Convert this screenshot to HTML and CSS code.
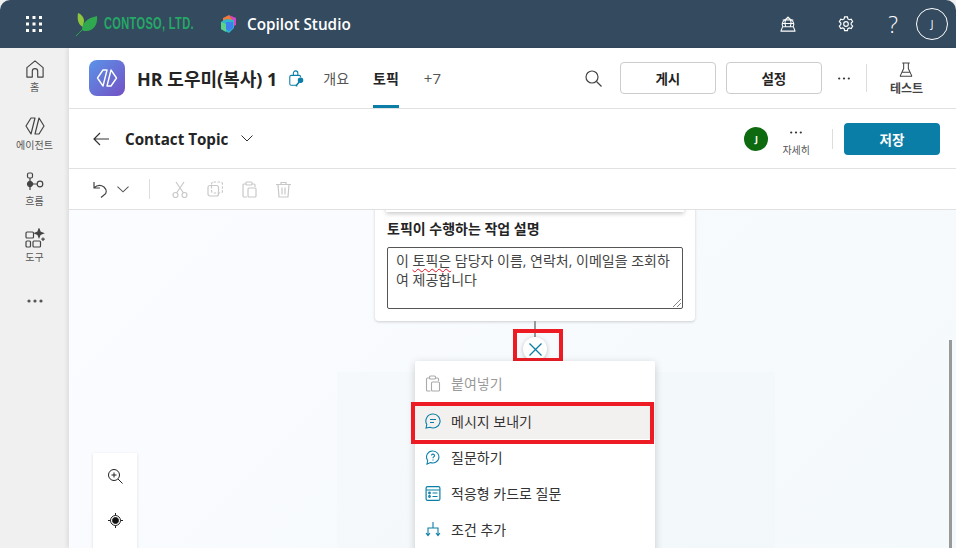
FILE: index.html
```html
<!DOCTYPE html>
<html lang="ko">
<head>
    <meta charset="UTF-8">
    <title>Copilot Studio</title>
    <link rel="stylesheet" href="styles.css">
</head>
<body>
    <header class="topbar">
        <svg class="waffle" width="16" height="16" viewBox="0 0 16 16" fill="#fff">
            <rect x="0" y="0" width="3" height="3"/><rect x="6.5" y="0" width="3" height="3"/><rect x="13" y="0" width="3" height="3"/>
            <rect x="0" y="6.5" width="3" height="3"/><rect x="6.5" y="6.5" width="3" height="3"/><rect x="13" y="6.5" width="3" height="3"/>
            <rect x="0" y="13" width="3" height="3"/><rect x="6.5" y="13" width="3" height="3"/><rect x="13" y="13" width="3" height="3"/>
        </svg>
        <svg class="leaf" width="22" height="24" viewBox="0 0 22 24">
            <path d="M7 15C2 13 1 7 2 1c3 1 6 4 6 8z" fill="#8cc63f"/>
            <path d="M6 18c0-7 5-12 15-14 1 8-3 15-11 15-1 0-3 0-4-1z" fill="#2fa84f"/>
            <path d="M0 24c5-5 9-9 13-14" stroke="#2fa84f" stroke-width="1" fill="none"/>
        </svg>
        <span class="brand">CONTOSO, LTD.</span>
        <svg class="cube" width="18" height="18" viewBox="0 0 18 18">
            <path d="M9 0l7 3v7l-4 2V4z" fill="#d645c8"/>
            <path d="M3 3l6-3 3 4v6H3z" fill="#ef7a3c"/>
            <path d="M1 7l5-3 8 1v8l-5 5-8-4z" fill="#2fb6c9"/>
            <path d="M6 7h7v6l-4 3-3-2z" fill="#3f7ff0"/>
            <path d="M1 7l5 2v8l-5-3z" fill="#5bd28c"/>
        </svg>
        <span class="product">Copilot Studio</span>
        <div class="topbar-actions">
            <svg class="top-icon" width="16" height="16" viewBox="0 0 18 18" fill="none" stroke="#fff" stroke-width="1.2">
                <path d="M3 12a6.500 6.500 0 1 1 12 0"/><path d="M9 1c-4 3-4 8-2.500 11M9 1c4 3 4 8 2.500 11M3 4.500h12M2.300 8.500h13.400"/><path d="M3 12h12l2 5H1z" stroke-linejoin="round"/>
            </svg>
            <svg class="top-icon gear" width="16" height="16" viewBox="0 0 18 18" fill="none" stroke="#fff" stroke-width="1.3">
                <circle cx="9" cy="9" r="2.600"/>
                <path d="M7.400 1h3.200l.5 2.300 1.600.9 2.200-.7 1.600 2.800-1.700 1.600v1.800l1.700 1.600-1.600 2.800-2.200-.7-1.600.9-.5 2.200H7.400l-.5-2.200-1.600-.9-2.200.7-1.600-2.800 1.700-1.600V7.900L1.500 6.300l1.600-2.800 2.200.7 1.600-.9z"/>
            </svg>
            <span class="help">?</span>
            <span class="me">J</span>
        </div>
    </header>

    <div class="shell">
        <nav class="sidebar">
            <a class="nav-item">
                <svg width="18" height="18" viewBox="0 0 20 20" fill="none" stroke="#444" stroke-width="1.300">
                    <path d="M1 8.500 10 1l9 7.500V19h-6v-6.500a3 3 0 0 0-6 0V19H1z" stroke-linejoin="round"/>
                </svg>
                <span>홈</span>
            </a>
            <a class="nav-item">
                <svg width="20" height="20" viewBox="0 0 20 20" fill="none" stroke="#444" stroke-width="1.200" stroke-linejoin="round">
                    <path d="M6 2h4L6 18 1 10zM14 18h-4l4-16 5 8z"/>
                </svg>
                <span>에이전트</span>
            </a>
            <a class="nav-item">
                <svg width="20" height="20" viewBox="0 0 20 20" fill="none" stroke="#444" stroke-width="1.200">
                    <rect x="2.500" y="1" width="5" height="5" rx="1.500"/><path d="M5 6v5M5 13v5M8 12h4"/>
                    <rect x="2.500" y="9.500" width="5" height="5" rx="2.500" fill="#444" transform="rotate(45 5 12)"/>
                    <circle cx="15" cy="12" r="2.800"/>
                </svg>
                <span>흐름</span>
            </a>
            <a class="nav-item">
                <svg width="20" height="20" viewBox="0 0 20 20" fill="none" stroke="#444" stroke-width="1.200">
                    <rect x="1" y="4" width="7.500" height="6" rx="1"/><rect x="1" y="13" width="4.500" height="6" rx="1"/><rect x="8" y="13" width="7.500" height="6" rx="1"/>
                    <path d="M14 1l1.200 3 3 1.200-3 1.200-1.200 3-1.200-3-3-1.200 3-1.200zM18 9.500v3.500M16.300 11.200h3.500" fill="#444"/>
                </svg>
                <span>도구</span>
            </a>
            <svg class="nav-more" width="16" height="4" viewBox="0 0 16 4" fill="#555">
                <circle cx="2" cy="2" r="1.600"/><circle cx="8" cy="2" r="1.600"/><circle cx="14" cy="2" r="1.600"/>
            </svg>
        </nav>

        <main class="main">
            <section class="agent-bar">
                <div class="agent-logo">
                    <svg width="22" height="20" viewBox="0 0 22 20" fill="none" stroke="#fff" stroke-width="1.400" stroke-linejoin="round">
                        <path d="M7 2h4L7 18 1.500 10zM15 18h-4l4-16 5.500 8z"/>
                    </svg>
                </div>
                <h1 class="agent-name">HR 도우미(복사) 1</h1>
                <svg class="agent-lock" width="17" height="17" viewBox="0 0 17 19" fill="none" stroke="#0b7ea8" stroke-width="1.200">
                    <path d="M5 6V3.500a2.500 2.500 0 0 1 5 0V6M8 17H2.500A1.500 1.500 0 0 1 1 15.500v-8A1.500 1.500 0 0 1 2.500 6h9A1.500 1.500 0 0 1 13 7.500V8"/>
                    <circle cx="13" cy="11.500" r="2.500" fill="#0b7ea8"/><path d="M11.500 13.500 8.500 17v1.500" stroke-width="1.800"/>
                </svg>
                <a class="tab">개요</a>
                <a class="tab tab-active">토픽</a>
                <a class="tab tab-more">+7</a>
                <div class="agent-actions">
                    <svg class="search" width="17" height="17" viewBox="0 0 17 17" fill="none" stroke="#444" stroke-width="1.200">
                        <circle cx="7" cy="7" r="6"/><path d="M11.500 11.500 16.500 16.500"/>
                    </svg>
                    <button class="btn">게시</button>
                    <button class="btn">설정</button>
                    <svg class="dots" width="12" height="3" viewBox="0 0 12 3" fill="#333">
                        <circle cx="1.200" cy="1.500" r="1.100"/><circle cx="6" cy="1.500" r="1.100"/><circle cx="10.800" cy="1.500" r="1.100"/>
                    </svg>
                    <span class="vline"></span>
                    <div class="test">
                        <svg width="14" height="15" viewBox="0 0 14 16" fill="none" stroke="#444" stroke-width="1.100">
                            <path d="M3 1h8M4.500 1v6L1 14.500a.5.5 0 0 0 .5.8h11a.5.5 0 0 0 .5-.8L9.500 7V1M3 11h8"/>
                        </svg>
                        <span>테스트</span>
                    </div>
                </div>
            </section>

            <section class="topic-bar">
                <svg class="back" width="16" height="14" viewBox="0 0 16 14" fill="none" stroke="#333" stroke-width="1.200">
                    <path d="M7 1 1 7l6 6M1 7h15"/>
                </svg>
                <span class="topic-name">Contact Topic</span>
                <svg width="12" height="7" viewBox="0 0 12 7" fill="none" stroke="#333" stroke-width="1">
                    <path d="M.5.500 6 6l5.500-5.500"/>
                </svg>
                <div class="topic-actions">
                    <span class="avatar">J</span>
                    <div class="more">
                        <svg class="dots-small" width="12" height="3" viewBox="0 0 12 3" fill="#333">
                            <circle cx="1.200" cy="1.500" r="1.100"/><circle cx="6" cy="1.500" r="1.100"/><circle cx="10.800" cy="1.500" r="1.100"/>
                        </svg>
                        <span>자세히</span>
                    </div>
                    <span class="vline vline-short"></span>
                    <button class="save">저장</button>
                </div>
            </section>

            <section class="toolbar">
                <svg width="15" height="17" viewBox="0 0 15 17" fill="none" stroke="#444" stroke-width="1.200">
                    <path d="M1 1v6h6M1 7c3-3 7-3 10-1 3 3 3 6 0 8l-3 2.500"/>
                </svg>
                <svg class="caret" width="12" height="7" viewBox="0 0 13 7" fill="none" stroke="#555" stroke-width="1.100">
                    <path d="M.5.500 6.500 6l6-5.500"/>
                </svg>
                <span class="tool-sep"></span>
                <svg class="tool-off" width="16" height="17" viewBox="0 0 16 17" fill="none" stroke="#c8c8c8" stroke-width="1.200">
                    <circle cx="3.500" cy="14" r="2.500"/><circle cx="12.500" cy="14" r="2.500"/><path d="M4.500 12 12 1M11.500 12 4 1"/>
                </svg>
                <svg class="tool-off" width="16" height="16" viewBox="0 0 16 16" fill="none" stroke="#c8c8c8" stroke-width="1.200">
                    <rect x="4.500" y="1" width="11" height="11" rx="2" stroke-dasharray="2.500 1.500"/><rect x="1" y="4.500" width="10.500" height="10.500" rx="2"/>
                </svg>
                <svg class="tool-off" width="15" height="17" viewBox="0 0 15 17" fill="none" stroke="#c8c8c8" stroke-width="1.200">
                    <path d="M4 3H2a1 1 0 0 0-1 1v11a1 1 0 0 0 1 1h3M10 3h2a1 1 0 0 1 1 1v2"/><rect x="4" y="1" width="6" height="3" rx="1"/><rect x="6" y="7" width="8" height="9" rx="1"/>
                </svg>
                <svg class="tool-off" width="15" height="17" viewBox="0 0 15 17" fill="none" stroke="#c8c8c8" stroke-width="1.200">
                    <path d="M0 3.500h15M5 3.500V1.500h5v2M2 3.500 3 16h9l1-12.500M6 6.500v7M9 6.500v7"/>
                </svg>
            </section>

            <section class="canvas">
                <div class="ghost-node"></div>

                <div class="node">
                    <div class="node-prev"></div>
                    <label class="node-label">토픽이 수행하는 작업 설명</label>
                    <div class="node-text">
                        <p>이 <span class="squiggle">토픽은</span> 담당자 이름, 연락처, 이메일을 조회하<br>여 제공합니다</p>
                        <svg class="resize" width="8" height="8" viewBox="0 0 8 8" stroke="#666" stroke-width=".8">
                            <path d="M0 8 8 0M4 8l4-4"/>
                        </svg>
                    </div>
                </div>

                <span class="connector"></span>
                <button class="add-node">
                    <svg width="13" height="13" viewBox="0 0 13 13" stroke="#0b7ea8" stroke-width="1.300">
                        <path d="M.5.500l12 12M12.500.500l-12 12"/>
                    </svg>
                </button>
                <span class="mark mark-add"></span>

                <div class="menu">
                    <div class="menu-item menu-item-off">
                        <svg width="15" height="17" viewBox="0 0 15 17" fill="none" stroke="#aaa" stroke-width="1.100">
                            <path d="M4 3H2a1 1 0 0 0-1 1v11a1 1 0 0 0 1 1h3M10 3h2a1 1 0 0 1 1 1v2"/><rect x="4" y="1" width="6" height="3" rx="1"/><rect x="6" y="7" width="8" height="9" rx="1"/>
                        </svg>
                        <span>붙여넣기</span>
                    </div>
                    <div class="menu-item menu-item-on">
                        <svg width="16" height="16" viewBox="0 0 16 16" fill="none" stroke="#0b7ea8" stroke-width="1.100">
                            <path d="M8 1a7 7 0 1 1-3 13.300L1 15l.8-3.500A7 7 0 0 1 8 1zM5 6.500h6M5 9.500h4"/>
                        </svg>
                        <span>메시지 보내기</span>
                    </div>
                    <div class="menu-item">
                        <svg width="14" height="15" viewBox="0 0 14 15" fill="none" stroke="#0b7ea8" stroke-width="1.100">
                            <path d="M7 1a6 6 0 1 1-2.500 11.500L1 14l.7-3.500A6 6 0 0 1 7 1zM5.500 5.500A1.500 1.500 0 1 1 7.500 7c-.5.300-.5.600-.5 1.200M7 9.500v1"/>
                        </svg>
                        <span>질문하기</span>
                    </div>
                    <div class="menu-item">
                        <svg width="15" height="15" viewBox="0 0 15 15" fill="none" stroke="#0b7ea8" stroke-width="1.200">
                            <rect x=".6" y=".6" width="13.800" height="13.800" rx="1.500"/><path d="M1 4h13M7 7h5M7 10.500h5"/><circle cx="4" cy="7" r=".8"/><circle cx="4" cy="10.500" r=".8"/>
                        </svg>
                        <span>적응형 카드로 질문</span>
                    </div>
                    <div class="menu-item">
                        <svg width="15" height="15" viewBox="0 0 15 15" fill="none" stroke="#0b7ea8" stroke-width="1.100">
                            <path d="M7.500 0v6M2.500 13V6h10v7M.5 11l2 2.500 2-2.500M10.500 11l2 2.500 2-2.500"/>
                        </svg>
                        <span>조건 추가</span>
                    </div>
                </div>
                <span class="mark mark-menu"></span>

                <div class="zoom-box">
                    <svg width="15" height="15" viewBox="0 0 15 15" fill="none" stroke="#222" stroke-width="1">
                        <circle cx="6" cy="6" r="5.500"/><path d="M3.500 6h5M6 3.500v5M10 10l4.500 4.500"/>
                    </svg>
                    <svg width="15" height="15" viewBox="0 0 15 15" fill="none" stroke="#222" stroke-width="1">
                        <circle cx="7.500" cy="7.500" r="5"/><circle cx="7.500" cy="7.500" r="3" fill="#111"/><path d="M7.500 0v2.500M7.500 12.500V15M0 7.500h2.500M12.500 7.500H15"/>
                    </svg>
                </div>

                <span class="scroll-thumb"></span>
            </section>
        </main>
    </div>
</body>
</html>
```

FILE: styles.css
```css
* {
    margin: 0;
    padding: 0;
    box-sizing: border-box;
    font-family: "Open Sans", "Noto Sans CJK KR", sans-serif;
}

html, body {
    height: 100%;
    overflow: hidden;
}

body {
    display: flex;
    flex-direction: column;
    background-color: #f0f0f0;
    color: #242424;
    font-size: 14px;
}

button {
    background: none;
    border: none;
}

.topbar {
    display: flex;
    align-items: center;
    flex: 0 0 48px;
    background-color: #344a5f;
    border-radius: 10px 10px 0 0;
    color: white;
}

.waffle {
    margin-left: 26px;
}

.leaf {
    margin-left: 34px;
}

.brand {
    width: 116px;
    margin-left: 6px;
    color: #25a866;
    font-family: "Liberation Sans", sans-serif;
    font-size: 16px;
    font-weight: bold;
    letter-spacing: .5px;
    white-space: nowrap;
    transform: scaleX(.69);
    transform-origin: left;
}

.product {
    margin-left: 9px;
    font-size: 15.3px;
    font-weight: 600;
}

.topbar-actions {
    display: flex;
    align-items: center;
    margin-left: auto;
    margin-right: 8px;
}

.gear {
    margin-left: 42px;
}

.help {
    margin-left: 34px;
    font-size: 23px;
    font-weight: 300;
    line-height: 30px;
}

.me {
    display: flex;
    align-items: center;
    justify-content: center;
    width: 32px;
    height: 32px;
    margin-left: 18px;
    border: 1px solid #fff;
    border-radius: 50%;
    font-size: 10px;
}

.shell {
    display: flex;
    flex: 1;
    min-height: 0;
}

.sidebar {
    display: flex;
    flex-direction: column;
    align-items: center;
    flex: 0 0 69px;
    padding-top: 12px;
    background-color: #f0f0f0;
}

.nav-item {
    display: flex;
    flex-direction: column;
    align-items: center;
    height: 56px;
    color: #555;
    font-size: 10px;
}

.nav-item span {
    margin-top: 3px;
    line-height: 13px;
}

.nav-more {
    margin-top: 15px;
}

.main {
    display: flex;
    flex-direction: column;
    flex: 1;
    min-width: 0;
    background-color: white;
    box-shadow: -2px 0 4px rgba(0,0,0,0.08);
}

.agent-bar {
    display: flex;
    align-items: center;
    flex: 0 0 61px;
    padding-left: 20px;
    border-bottom: 1px solid #e1e1e1;
}

.agent-logo {
    display: flex;
    align-items: center;
    justify-content: center;
    width: 36px;
    height: 36px;
    background: linear-gradient(135deg, #5b94e8, #7350c4);
    border-radius: 8px;
}

.agent-name {
    margin-left: 12px;
    font-size: 18px;
    font-weight: 700;
    white-space: nowrap;
}

.agent-lock {
    margin-left: 11px;
}

.tab {
    display: flex;
    align-items: center;
    align-self: stretch;
    margin-left: 18px;
    color: #555;
    font-size: 14px;
}

.tab-active {
    margin-left: 24px;
    padding-top: 3px;
    border-bottom: 3px solid #0b7ea8;
    color: #242424;
    font-weight: 700;
}

.tab-more {
    margin-left: 25px;
    font-size: 15px;
}

.agent-actions {
    display: flex;
    align-items: center;
    margin-left: auto;
    margin-right: 33px;
}

.search {
    margin-right: 18px;
}

.btn {
    width: 96px;
    height: 32px;
    margin-right: 10px;
    background-color: white;
    border: 1px solid #ccc;
    border-radius: 4px;
    color: #242424;
    font-size: 13.5px;
    font-weight: 700;
}

.dots {
    margin-left: 6px;
    margin-right: 16px;
}

.vline {
    width: 1px;
    height: 28px;
    background-color: #ddd;
}

.vline-short {
    height: 20px;
}

.test {
    display: flex;
    flex-direction: column;
    align-items: center;
    margin-left: 23px;
    margin-top: 2px;
    color: #444;
    font-size: 12px;
    font-weight: 700;
}

.test span {
    margin-top: 4px;
    line-height: 16px;
}

.topic-bar {
    display: flex;
    align-items: center;
    flex: 0 0 60px;
    padding-left: 24px;
    border-bottom: 1px solid #e1e1e1;
}

.topic-name {
    margin-left: 16px;
    margin-right: 13px;
    font-size: 15.2px;
    font-weight: 700;
}

.topic-actions {
    display: flex;
    align-items: center;
    margin-left: auto;
    margin-right: 16px;
}

.avatar {
    display: flex;
    align-items: center;
    justify-content: center;
    width: 24px;
    height: 24px;
    background-color: #0e6a0e;
    border-radius: 50%;
    color: white;
    font-size: 9px;
    font-weight: 700;
}

.more {
    display: flex;
    flex-direction: column;
    align-items: center;
    margin-left: 14px;
    margin-right: 22px;
    color: #555;
    font-size: 10px;
}

.dots-small {
    margin-top: 10px;
    margin-bottom: 8px;
}

.save {
    width: 96px;
    height: 32px;
    margin-left: 11px;
    background-color: #0b7ea8;
    border-radius: 4px;
    color: white;
    font-size: 13.5px;
    font-weight: 700;
}

.toolbar {
    display: flex;
    align-items: center;
    flex: 0 0 41px;
    padding-left: 24px;
    border-bottom: 1px solid #e1e1e1;
}

.caret {
    margin-left: 9px;
}

.tool-sep {
    width: 1px;
    height: 20px;
    margin-left: 20px;
    margin-right: 22px;
    background-color: #ddd;
}

.tool-off {
    margin-right: 19px;
}

.canvas {
    position: relative;
    flex: 1;
    min-height: 0;
    overflow: hidden;
    background: linear-gradient(135deg, #fbfcff, #f4f9fc);
}

.ghost-node {
    position: absolute;
    left: 268px;
    top: 162px;
    width: 438px;
    height: 200px;
    background-color: rgba(230,240,240,0.15);
}

.node {
    position: absolute;
    left: 306px;
    top: -10px;
    width: 320px;
    height: 121px;
    padding: 19px 12px 0;
    background-color: white;
    border-radius: 4px;
    box-shadow: 0 1px 3px rgba(0,0,0,0.18);
}

.node-prev {
    position: absolute;
    left: 11px;
    right: 11px;
    top: 0;
    height: 12px;
    box-shadow: 0 2px 4px rgba(0,0,0,0.2);
}

.node-label {
    display: block;
    font-size: 14px;
    font-weight: 700;
    line-height: 19px;
}

.node-text {
    position: relative;
    height: 62px;
    margin-top: 9px;
    padding: 3px 8px;
    border: 1px solid #555;
    border-radius: 2px;
    color: #444;
    font-size: 14px;
    line-height: 19px;
}

.squiggle {
    text-decoration: underline wavy #e81123 1.3px;
    text-underline-offset: 2px;
}

.resize {
    position: absolute;
    right: 1px;
    bottom: 1px;
}

.connector {
    position: absolute;
    left: 465px;
    top: 111px;
    width: 2px;
    height: 16px;
    background-color: #999;
}

.add-node {
    position: absolute;
    left: 454px;
    top: 127px;
    display: flex;
    align-items: center;
    justify-content: center;
    width: 24px;
    height: 24px;
    background-color: white;
    border-radius: 50%;
    box-shadow: 0 1px 4px rgba(0,0,0,0.25);
}

.mark {
    position: absolute;
    border: 4px solid #ed1c24;
}

.mark-add {
    left: 444px;
    top: 119px;
    width: 50px;
    height: 33px;
}

.menu {
    position: absolute;
    left: 346px;
    top: 151px;
    width: 240px;
    height: 200px;
    padding-top: 4px;
    background-color: white;
    border-radius: 2px;
    box-shadow: 0 2px 8px rgba(0,0,0,0.18);
}

.menu-item {
    display: flex;
    align-items: center;
    gap: 10px;
    height: 36px;
    padding-left: 10px;
    color: #333;
    font-size: 14px;
}

.menu-item svg {
    flex: 0 0 16px;
}

.menu-item-off {
    color: #999;
}

.menu-item-on {
    margin-top: 2px;
    background-color: #f3f1ef;
}

.mark-menu {
    left: 342px;
    top: 192px;
    width: 243px;
    height: 42px;
}

.zoom-box {
    position: absolute;
    left: 24px;
    top: 243px;
    display: flex;
    flex-direction: column;
    align-items: center;
    gap: 29px;
    width: 44px;
    height: 120px;
    padding-top: 16px;
    background-color: white;
    box-shadow: 0 1px 3px rgba(0,0,0,0.12);
}

.scroll-thumb {
    position: absolute;
    right: 4px;
    top: 130px;
    width: 3px;
    height: 220px;
    background-color: #999;
}
```
